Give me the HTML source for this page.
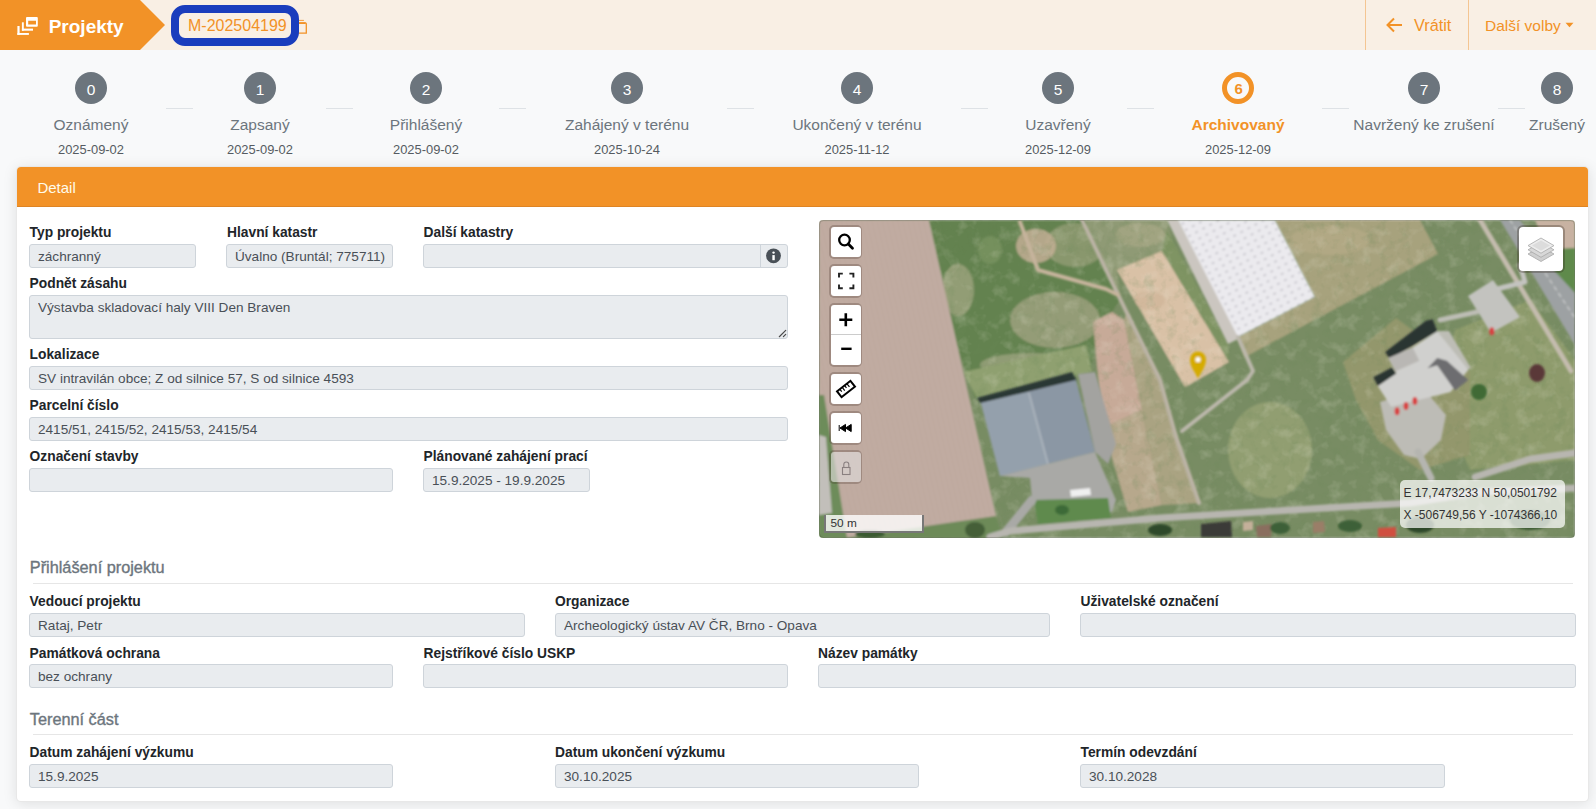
<!DOCTYPE html>
<html><head><meta charset="utf-8"><title>Projekt M-202504199</title>
<style>
html,body{margin:0;padding:0;}
body{width:1596px;height:809px;position:relative;overflow:hidden;background:#f8f9fa;font-family:"Liberation Sans",sans-serif;}
.t{position:absolute;white-space:nowrap;}
.r{position:absolute;}
</style></head><body>
<div class="r" style="left:0px;top:0px;width:1596px;height:50px;background:#f9efe4;"></div>
<svg class="r" style="left:0;top:0" width="170" height="50"><polygon points="0,0 140,0 165,25 140,50 0,50" fill="#f29227"/></svg>
<svg class="r" style="left:0;top:0" width="50" height="50" viewBox="0 0 50 50">
<path fill-rule="evenodd" fill="#fff" d="M27,17 H36.8 Q37.8,17 37.8,18 V25.7 Q37.8,26.7 36.8,26.7 H27 Q26,26.7 26,25.7 V18 Q26,17 27,17 Z M28.2,20.8 V24.5 H36 V20.8 Z"/>
<rect x="21.9" y="22.3" width="1.9" height="8.4" fill="#fff"/><rect x="21.9" y="28.6" width="11.1" height="2.1" fill="#fff"/>
<rect x="17.4" y="26" width="2.2" height="8.9" fill="#fff"/><rect x="17.4" y="33" width="11.5" height="1.9" fill="#fff"/>
</svg>
<div class="t" style="left:48.7px;top:14.82px;font-size:19px;line-height:23px;color:#fff;font-weight:bold;">Projekty</div>
<svg class="r" style="left:297px;top:18px" width="14" height="18" viewBox="0 0 14 18">
<path d="M0,4.9 H8.4 Q9.3,4.9 9.3,5.8 V15.1 H0" fill="none" stroke="#f29227" stroke-width="1.3"/>
<path d="M0,5.2 H8.6" stroke="#f29227" stroke-width="1.6"/>
<path d="M0,2.4 H6.9" stroke="#f29227" stroke-width="0.9"/>
</svg>
<div class="r" style="left:171px;top:5px;width:128px;height:41px;border:8px solid #1a3dbd;border-radius:14px;box-sizing:border-box;"></div>
<div class="t" style="left:188px;top:15.66px;font-size:16px;line-height:19px;color:#f29227;font-weight:normal;">M-202504199</div>
<div class="r" style="left:1365px;top:0px;width:1px;height:50px;background:#f4c592;"></div>
<div class="r" style="left:1468px;top:0px;width:1px;height:50px;background:#f4c592;"></div>
<svg class="r" style="left:1384px;top:15px" width="20" height="20" viewBox="0 0 20 20">
<path d="M18,10 H4 M10,3.5 L3.5,10 L10,16.5" fill="none" stroke="#f29227" stroke-width="2"/>
</svg>
<div class="t" style="left:1414px;top:15.35px;font-size:16.3px;line-height:20px;color:#f29227;font-weight:normal;">Vrátit</div>
<div class="t" style="left:1485px;top:16.13px;font-size:15.5px;line-height:19px;color:#f29227;font-weight:normal;">Další volby</div>
<svg class="r" style="left:1565px;top:22px" width="10" height="7"><polygon points="0.5,0.8 8.5,0.8 4.5,5.2" fill="#f29227"/></svg>
<div class="r" style="left:0px;top:50px;width:1596px;height:117px;background:#f8f9fa;"></div>
<div class="r" style="left:75px;top:72px;width:32px;height:32px;border-radius:50%;background:#6c757d;"></div>
<div class="t" style="left:-309px;width:800px;text-align:center;top:79.53px;font-size:15.5px;line-height:19px;color:#fff;font-weight:normal;">0</div>
<div class="t" style="left:-309px;width:800px;text-align:center;top:114.73px;font-size:15.5px;line-height:19px;color:#6c757d;font-weight:normal;">Oznámený</div>
<div class="t" style="left:-309px;width:800px;text-align:center;top:142.03px;font-size:12.9px;line-height:15px;color:#555b61;font-weight:normal;">2025-09-02</div>
<div class="r" style="left:244px;top:72px;width:32px;height:32px;border-radius:50%;background:#6c757d;"></div>
<div class="t" style="left:-140px;width:800px;text-align:center;top:79.53px;font-size:15.5px;line-height:19px;color:#fff;font-weight:normal;">1</div>
<div class="t" style="left:-140px;width:800px;text-align:center;top:114.73px;font-size:15.5px;line-height:19px;color:#6c757d;font-weight:normal;">Zapsaný</div>
<div class="t" style="left:-140px;width:800px;text-align:center;top:142.03px;font-size:12.9px;line-height:15px;color:#555b61;font-weight:normal;">2025-09-02</div>
<div class="r" style="left:410px;top:72px;width:32px;height:32px;border-radius:50%;background:#6c757d;"></div>
<div class="t" style="left:26px;width:800px;text-align:center;top:79.53px;font-size:15.5px;line-height:19px;color:#fff;font-weight:normal;">2</div>
<div class="t" style="left:26px;width:800px;text-align:center;top:114.73px;font-size:15.5px;line-height:19px;color:#6c757d;font-weight:normal;">Přihlášený</div>
<div class="t" style="left:26px;width:800px;text-align:center;top:142.03px;font-size:12.9px;line-height:15px;color:#555b61;font-weight:normal;">2025-09-02</div>
<div class="r" style="left:611px;top:72px;width:32px;height:32px;border-radius:50%;background:#6c757d;"></div>
<div class="t" style="left:227px;width:800px;text-align:center;top:79.53px;font-size:15.5px;line-height:19px;color:#fff;font-weight:normal;">3</div>
<div class="t" style="left:227px;width:800px;text-align:center;top:114.73px;font-size:15.5px;line-height:19px;color:#6c757d;font-weight:normal;">Zahájený v terénu</div>
<div class="t" style="left:227px;width:800px;text-align:center;top:142.03px;font-size:12.9px;line-height:15px;color:#555b61;font-weight:normal;">2025-10-24</div>
<div class="r" style="left:841px;top:72px;width:32px;height:32px;border-radius:50%;background:#6c757d;"></div>
<div class="t" style="left:457px;width:800px;text-align:center;top:79.53px;font-size:15.5px;line-height:19px;color:#fff;font-weight:normal;">4</div>
<div class="t" style="left:457px;width:800px;text-align:center;top:114.73px;font-size:15.5px;line-height:19px;color:#6c757d;font-weight:normal;">Ukončený v terénu</div>
<div class="t" style="left:457px;width:800px;text-align:center;top:142.03px;font-size:12.9px;line-height:15px;color:#555b61;font-weight:normal;">2025-11-12</div>
<div class="r" style="left:1042px;top:72px;width:32px;height:32px;border-radius:50%;background:#6c757d;"></div>
<div class="t" style="left:658px;width:800px;text-align:center;top:79.53px;font-size:15.5px;line-height:19px;color:#fff;font-weight:normal;">5</div>
<div class="t" style="left:658px;width:800px;text-align:center;top:114.73px;font-size:15.5px;line-height:19px;color:#6c757d;font-weight:normal;">Uzavřený</div>
<div class="t" style="left:658px;width:800px;text-align:center;top:142.03px;font-size:12.9px;line-height:15px;color:#555b61;font-weight:normal;">2025-12-09</div>
<div class="r" style="left:1222px;top:72px;width:32px;height:32px;border-radius:50%;border:5.2px solid #f29227;background:#f8f9fa;box-sizing:border-box;"></div>
<div class="t" style="left:838.5999999999999px;width:800px;text-align:center;top:80.00px;font-size:15px;line-height:18px;color:#f29227;font-weight:bold;">6</div>
<div class="t" style="left:838px;width:800px;text-align:center;top:114.73px;font-size:15.5px;line-height:19px;color:#f29227;font-weight:bold;">Archivovaný</div>
<div class="t" style="left:838px;width:800px;text-align:center;top:142.03px;font-size:12.9px;line-height:15px;color:#555b61;font-weight:normal;">2025-12-09</div>
<div class="r" style="left:1408px;top:72px;width:32px;height:32px;border-radius:50%;background:#6c757d;"></div>
<div class="t" style="left:1024px;width:800px;text-align:center;top:79.53px;font-size:15.5px;line-height:19px;color:#fff;font-weight:normal;">7</div>
<div class="t" style="left:1024px;width:800px;text-align:center;top:114.73px;font-size:15.5px;line-height:19px;color:#6c757d;font-weight:normal;">Navržený ke zrušení</div>
<div class="r" style="left:1541px;top:72px;width:32px;height:32px;border-radius:50%;background:#6c757d;"></div>
<div class="t" style="left:1157px;width:800px;text-align:center;top:79.53px;font-size:15.5px;line-height:19px;color:#fff;font-weight:normal;">8</div>
<div class="t" style="left:1157px;width:800px;text-align:center;top:114.73px;font-size:15.5px;line-height:19px;color:#6c757d;font-weight:normal;">Zrušený</div>
<div class="r" style="left:166px;top:108px;width:27px;height:1px;background:#dee2e6;"></div>
<div class="r" style="left:326px;top:108px;width:27px;height:1px;background:#dee2e6;"></div>
<div class="r" style="left:499px;top:108px;width:27px;height:1px;background:#dee2e6;"></div>
<div class="r" style="left:727px;top:108px;width:27px;height:1px;background:#dee2e6;"></div>
<div class="r" style="left:961px;top:108px;width:27px;height:1px;background:#dee2e6;"></div>
<div class="r" style="left:1127px;top:108px;width:27px;height:1px;background:#dee2e6;"></div>
<div class="r" style="left:1322px;top:108px;width:27px;height:1px;background:#dee2e6;"></div>
<div class="r" style="left:1498px;top:108px;width:27px;height:1px;background:#dee2e6;"></div>
<div class="r" style="left:16px;top:166px;width:1573px;height:636px;background:#fff;border-radius:5px;box-sizing:border-box;border:1px solid rgba(0,0,0,.09);box-shadow:0 2px 14px rgba(0,0,0,.10);"></div>
<div class="r" style="left:17px;top:167px;width:1571px;height:40px;background:#f29227;border-radius:4px 4px 0 0;"></div>
<div class="r" style="left:17px;top:206px;width:1571px;height:1px;background:#de8424;"></div>
<div class="t" style="left:37.4px;top:179.10px;font-size:15px;line-height:18px;color:#fffbea;font-weight:normal;">Detail</div>
<div class="t" style="left:29.6px;top:223.72px;font-size:13.8px;line-height:17px;color:#212529;font-weight:bold;">Typ projektu</div>
<div class="t" style="left:227px;top:223.72px;font-size:13.8px;line-height:17px;color:#212529;font-weight:bold;">Hlavní katastr</div>
<div class="t" style="left:423.5px;top:223.72px;font-size:13.8px;line-height:17px;color:#212529;font-weight:bold;">Další katastry</div>
<div class="r" style="left:29px;top:244px;width:167px;height:24px;background:#e9ecef;border:1px solid #ced4da;border-radius:3px;box-sizing:border-box;"></div>
<div class="t" style="left:38px;top:248.69px;font-size:13.6px;line-height:16px;color:#495057;font-weight:normal;white-space:nowrap;overflow:hidden;width:155px;">záchranný</div>
<div class="r" style="left:226px;top:244px;width:167px;height:24px;background:#e9ecef;border:1px solid #ced4da;border-radius:3px;box-sizing:border-box;"></div>
<div class="t" style="left:235px;top:248.69px;font-size:13.6px;line-height:16px;color:#495057;font-weight:normal;white-space:nowrap;overflow:hidden;width:155px;">Úvalno (Bruntál; 775711)</div>
<div class="r" style="left:423px;top:244px;width:365px;height:24px;background:#e9ecef;border:1px solid #ced4da;border-radius:3px;box-sizing:border-box;"></div>
<div class="r" style="left:760px;top:245px;width:1px;height:22px;background:#ced4da;"></div>
<svg class="r" style="left:765px;top:248px" width="17" height="16" viewBox="0 0 17 16">
<circle cx="8.5" cy="7.8" r="7.4" fill="#495057"/><rect x="7.35" y="7.1" width="2.4" height="5.1" fill="#fff"/><circle cx="8.55" cy="4.6" r="1.2" fill="#fff"/></svg>
<div class="t" style="left:29.6px;top:274.72px;font-size:13.8px;line-height:17px;color:#212529;font-weight:bold;">Podnět zásahu</div>
<div class="r" style="left:29px;top:295px;width:759px;height:44px;background:#e9ecef;border:1px solid #ced4da;border-radius:3px;box-sizing:border-box;"></div>
<div class="t" style="left:38px;top:299.69px;font-size:13.6px;line-height:16px;color:#495057;font-weight:normal;white-space:nowrap;overflow:hidden;width:747px;">Výstavba skladovací haly VIII Den Braven</div>
<svg class="r" style="left:777px;top:328px" width="10" height="10" viewBox="0 0 10 10">
<path d="M2.3,8.7 L8.7,2.4 M6.4,8.7 L8.7,6.4" stroke="#4a4a4a" stroke-width="1.2" stroke-linecap="round"/></svg>
<div class="t" style="left:29.6px;top:345.72px;font-size:13.8px;line-height:17px;color:#212529;font-weight:bold;">Lokalizace</div>
<div class="r" style="left:29px;top:366px;width:759px;height:24px;background:#e9ecef;border:1px solid #ced4da;border-radius:3px;box-sizing:border-box;"></div>
<div class="t" style="left:38px;top:370.69px;font-size:13.6px;line-height:16px;color:#495057;font-weight:normal;white-space:nowrap;overflow:hidden;width:747px;">SV intravilán obce; Z od silnice 57, S od silnice 4593</div>
<div class="t" style="left:29.6px;top:396.92px;font-size:13.8px;line-height:17px;color:#212529;font-weight:bold;">Parcelní číslo</div>
<div class="r" style="left:29px;top:417px;width:759px;height:24px;background:#e9ecef;border:1px solid #ced4da;border-radius:3px;box-sizing:border-box;"></div>
<div class="t" style="left:38px;top:421.69px;font-size:13.6px;line-height:16px;color:#495057;font-weight:normal;white-space:nowrap;overflow:hidden;width:747px;">2415/51, 2415/52, 2415/53, 2415/54</div>
<div class="t" style="left:29.6px;top:447.72px;font-size:13.8px;line-height:17px;color:#212529;font-weight:bold;">Označení stavby</div>
<div class="t" style="left:423.5px;top:447.72px;font-size:13.8px;line-height:17px;color:#212529;font-weight:bold;">Plánované zahájení prací</div>
<div class="r" style="left:29px;top:468px;width:364px;height:24px;background:#e9ecef;border:1px solid #ced4da;border-radius:3px;box-sizing:border-box;"></div>
<div class="r" style="left:423px;top:468px;width:167px;height:24px;background:#e9ecef;border:1px solid #ced4da;border-radius:3px;box-sizing:border-box;"></div>
<div class="t" style="left:432px;top:472.69px;font-size:13.6px;line-height:16px;color:#495057;font-weight:normal;white-space:nowrap;overflow:hidden;width:155px;">15.9.2025 - 19.9.2025</div>
<svg class="r" style="left:819px;top:220px" width="756" height="318" viewBox="819 220 756 318">
<defs><pattern id="stripes" width="5" height="40" patternUnits="userSpaceOnUse" patternTransform="rotate(-12.9)"><rect x="0" y="0" width="1.2" height="40" fill="#b09a92" opacity="0.14"/><rect x="2.6" y="0" width="0.8" height="40" fill="#d0beb4" opacity="0.14"/></pattern><pattern id="dots" width="8" height="7" patternUnits="userSpaceOnUse" patternTransform="rotate(-28)"><rect x="2" y="3" width="3" height="1.3" fill="#bdbbc2"/></pattern><filter id="bl" x="-1%" y="-1%" width="102%" height="102%"><feGaussianBlur stdDeviation="0.9"/></filter>
<filter id="nz1" x="0" y="0" width="100%" height="100%"><feTurbulence type="fractalNoise" baseFrequency="0.09" numOctaves="3" seed="4"/><feColorMatrix values="0 0 0 0 0.15  0 0 0 0 0.25  0 0 0 0 0.1  2.2 0 0 0 -1.1"/></filter>
<filter id="nz2" x="0" y="0" width="100%" height="100%"><feTurbulence type="fractalNoise" baseFrequency="0.07" numOctaves="3" seed="11"/><feColorMatrix values="0 0 0 0 0.85  0 0 0 0 0.82  0 0 0 0 0.7  2.2 0 0 0 -1.1"/></filter>
<clipPath id="mc"><rect x="819" y="220" width="756" height="318" rx="4"/></clipPath></defs>
<g clip-path="url(#mc)"><g filter="url(#bl)">
<polygon points="819,220 1575,220 1575,538 819,538" fill="#788c64" />
<polygon points="929,220 1085,220 1120,300 1100,330 1090,370 975,398 958,350" fill="#64824f" />
<ellipse cx="958" cy="290" rx="16" ry="26" fill="#a2a682" opacity="0.75"/>
<ellipse cx="1055" cy="320" rx="45" ry="28" fill="#a4a484" opacity="0.75"/>
<ellipse cx="1075" cy="245" rx="30" ry="22" fill="#98a07a" opacity="0.7"/>
<ellipse cx="1030" cy="365" rx="50" ry="12" fill="#a3a684" opacity="0.7"/>
<ellipse cx="990" cy="250" rx="12" ry="14" fill="#7e9a68" opacity="0.6"/>
<polygon points="963,372 1086,345 1092,372 977,398" fill="#8fa070" />
<polygon points="1085,220 1167,220 1175,250 1117,270 1120,300" fill="#8f9a74" />
<ellipse cx="1140" cy="235" rx="25" ry="12" fill="#a8a888" opacity="0.7"/>
<ellipse cx="1036" cy="246" rx="20" ry="17" fill="#c2ae94" opacity="0.85"/>
<polygon points="1093,322 1112,312 1124,320 1142,410 1103,428" fill="#c7aa98" />
<polygon points="1103,428 1142,410 1162,505 1128,512" fill="#b7a88c" />
<polygon points="1124,320 1127,313 1160,380 1176,437 1199,503 1162,505 1142,410" fill="#aaa382" />
<polygon points="1117,270 1162,251 1229,362 1185,387" fill="#d9c1a6" />
<ellipse cx="1150" cy="300" rx="15" ry="10" fill="#d2b89c" />
<polygon points="1275,220 1420,220 1438,254 1245,357 1238,337 1315,297" fill="#a7a27d" />
<ellipse cx="1330" cy="240" rx="40" ry="15" fill="#b4aa86" opacity="0.8"/>
<polygon points="1162,251 1167,230 1228,344 1229,362" fill="#7f9464" />
<polygon points="1455,330 1530,300 1575,360 1575,460 1470,470 1440,400" fill="#8e9b6c" />
<polygon points="1343,362 1396,318 1470,372 1470,455 1420,470 1378,440 1356,400" fill="#93976c" />
<ellipse cx="1270" cy="450" rx="42" ry="48" fill="#97a274" opacity="0.8"/>
</g>
<rect x="819" y="220" width="756" height="318" filter="url(#nz1)" opacity="0.3"/>
<rect x="819" y="220" width="756" height="318" filter="url(#nz2)" opacity="0.25"/>
<g filter="url(#bl)">
<polygon points="819,220 929,220 1001,538 819,538" fill="#c0aba1" />
<polygon points="819,220 929,220 1001,538 819,538" fill="url(#stripes)" />
<polygon points="844,538 996,516 1003,538" fill="#6d8a58" />
<ellipse cx="975" cy="530" rx="10" ry="8" fill="#3a5232" opacity="0.8"/>
<polygon points="819,395 824,395 847,538 819,538" fill="#6d8c5a" />
<polygon points="819,435 826,437 832,513 819,515" fill="#c2bfba" />
<polygon points="1167,220 1178,220 1240,338 1228,344" fill="#cbc6c0" />
<polygon points="1178,220 1275,220 1315,297 1238,337" fill="#ebeaee" />
<polygon points="1178,220 1275,220 1315,297 1238,337" fill="url(#dots)" />
<polygon points="977,398 1072,372 1077,381 981,404" fill="#2a3834" />
<polygon points="981,403 1076,380 1095,452 1000,476" fill="#8b97a4" />
<polygon points="981,403 1029,392 1048,464 1000,476" fill="#94a0ac" />
<polyline points="1029,393 1048,464" fill="none" stroke="#b0b8c0" stroke-width="1.5" stroke-linejoin="round" stroke-linecap="round" />
<polygon points="1078,374 1095,372 1116,444 1108,464 1095,452" fill="#a3a3a0" />
<polygon points="1000,476 1095,452 1116,500 1112,512 1040,518 1032,500 1030,478" fill="#a9a9a6" />
<polygon points="1034,500 1108,498 1111,518 1038,524" fill="#5f8a4e" />
<polyline points="1032,500 1006,532" fill="none" stroke="#a9a9a6" stroke-width="9" stroke-linejoin="round" stroke-linecap="round" />
<ellipse cx="1062" cy="510" rx="7" ry="5" fill="#3e6a38" />
<polygon points="1070,490 1090,488 1091,495 1071,497" fill="#f0f0f0" />
<polyline points="990,537 1010,531 1160,518 1410,503 1480,492 1575,488" fill="none" stroke="#b8b6b0" stroke-width="7" stroke-linejoin="round" stroke-linecap="round" />
<polyline points="1475,477 1530,459 1575,453" fill="none" stroke="#b8b6b0" stroke-width="7" stroke-linejoin="round" stroke-linecap="round" />
<polyline points="1082,220 1127,313 1160,380 1176,437 1199,503" fill="none" stroke="#bcb4a6" stroke-width="4" stroke-linejoin="round" stroke-linecap="round" />
<polyline points="1020,222 1038,270 1106,289 1118,295" fill="none" stroke="#c6b49c" stroke-width="4" stroke-linejoin="round" stroke-linecap="round" />
<polyline points="1238,337 1253,371 1247,380 1182,431" fill="none" stroke="#bcb8ac" stroke-width="4" stroke-linejoin="round" stroke-linecap="round" />
<polygon points="1500,220 1520,220 1575,293 1575,345" fill="#9da1a3" />
<polyline points="1510,220 1575,318" fill="none" stroke="#e0e0e0" stroke-width="1" stroke-linejoin="round" stroke-linecap="round" stroke-dasharray="4 4"/>
<polyline points="1480,220 1571,371" fill="none" stroke="#c4bcae" stroke-width="5" stroke-linejoin="round" stroke-linecap="round" />
<polygon points="1535,220 1575,220 1575,248 1548,252" fill="#c8b2a2" />
<polygon points="1535,250 1575,248 1575,293" fill="#5f8a4c" />
<polygon points="1468,296 1493,280 1520,317 1491,333" fill="#c3c3bf" />
<polyline points="1493,290 1525,282 1520,265" fill="none" stroke="#c3c3bf" stroke-width="5" stroke-linejoin="round" stroke-linecap="round" />
<polygon points="1380,402 1423.8,389 1446,415 1441,440 1421,459 1404,455 1386,430" fill="#bdbcb6" />
<polyline points="1418,452 1431,478" fill="none" stroke="#b5b5b0" stroke-width="7" stroke-linejoin="round" stroke-linecap="round" />
<polyline points="1440,320 1477,312" fill="none" stroke="#bdbdb5" stroke-width="5" stroke-linejoin="round" stroke-linecap="round" />
<polygon points="1437,331 1449,331 1471,368 1462,372" fill="#bdbdb5" />
<polygon points="1377.8,386 1396.3,372.7 1388.2,357.9 1412.7,347.5 1437.2,331.2 1468.3,369.7 1450.5,392 1391.2,406.8" fill="#d0d0ce" />
<polygon points="1385.2,351.9 1426,320.8 1432.7,319.3 1437.2,331.2 1389.7,359.3" fill="#2c3432" />
<polygon points="1373.4,377.2 1391.9,367.5 1396.3,373.4 1377.8,386" fill="#2c3432" />
<polygon points="1388.2,357.9 1412.7,347.5 1419.3,360.8 1395.6,371.2" fill="#b9b7b4" />
<polygon points="1437.2,357.9 1446.8,360.8 1468.3,380.1 1455,390.5 1437.2,365.3 1427.5,368.2" fill="#6d6d70" />
<ellipse cx="1397.1" cy="411.3" rx="2.5" ry="4" fill="#d84040" />
<ellipse cx="1406" cy="406.1" rx="2.5" ry="4" fill="#d84040" />
<ellipse cx="1414.9" cy="400.9" rx="2.5" ry="4" fill="#d84040" />
<ellipse cx="1491.8" cy="331.2" rx="2.5" ry="4" fill="#d84040" />
<ellipse cx="1479" cy="392" rx="8" ry="8" fill="#3f6a35" />
<ellipse cx="1537" cy="373" rx="8" ry="9" fill="#5a3838" />
<polygon points="1201,524 1231,521 1232,537 1201,537" fill="#3a3a38" />
<polygon points="1256,526 1271,524 1271,537 1257,537" fill="#8a6e5e" />
<polygon points="1243,522 1253,521 1253,530 1243,531" fill="#c4b09a" />
<polygon points="1313,522 1324,521 1325,532 1313,533" fill="#9a7e68" />
<polygon points="1378,528 1396,527 1396,537 1378,537" fill="#d05040" />
<ellipse cx="1160" cy="530" rx="12" ry="6" fill="#2e4a2a" />
<ellipse cx="1420" cy="525" rx="14" ry="8" fill="#2e4a2a" />
<ellipse cx="1530" cy="520" rx="20" ry="10" fill="#3a5a32" />
<ellipse cx="870" cy="534" rx="15" ry="4" fill="#3a5a32" />
<ellipse cx="1280" cy="528" rx="10" ry="6" fill="#3e6038" />
<ellipse cx="1350" cy="526" rx="12" ry="6" fill="#3e6038" />
<path d="M1198,378.5 C1195,372 1190,367 1190,359.5 A8,8 0 0 1 1206,359.5 C1206,367 1201,372 1198,378.5 Z" fill="#d5ab00"/>
<ellipse cx="1198" cy="359.5" rx="2.6" ry="2.6" fill="#fff" />
</g>
</g>
<rect x="819.5" y="220.5" width="755" height="317" rx="4" fill="none" stroke="rgba(0,0,0,0.15)"/>
</svg>
<div class="r" style="left:829px;top:224.5px;width:33px;height:34px;border-radius:5px;background:rgba(60,40,30,0.25)"></div>
<div class="r" style="left:831px;top:226.5px;width:30px;height:30px;border-radius:3px;background:#fff"><svg width="30" height="30" viewBox="0 0 30 30"><circle cx="13.5" cy="13" r="5.3" fill="none" stroke="#000" stroke-width="2.3"/><path d="M17.3,17 L21.5,21.2" stroke="#000" stroke-width="2.8" stroke-linecap="round"/></svg></div>
<div class="r" style="left:829px;top:263.5px;width:33px;height:34px;border-radius:5px;background:rgba(60,40,30,0.25)"></div>
<div class="r" style="left:831px;top:265.5px;width:30px;height:30px;border-radius:3px;background:#fff"><svg width="30" height="30" viewBox="0 0 30 30"><path d="M8,11.5 V7.6 H11.8 M18.4,7.6 H22.4 V11.5 M22.4,18.4 V22.2 H18.4 M11.8,22.2 H8 V18.4" fill="none" stroke="#222" stroke-width="1.9"/></svg></div>
<div class="r" style="left:829px;top:303px;width:33px;height:64px;border-radius:5px;background:rgba(60,40,30,0.25)"></div>
<div class="r" style="left:831px;top:305px;width:30px;height:60px;border-radius:3px;background:#fff"><svg width="30" height="60" viewBox="0 0 30 60"><path d="M8.3,14.7 H21.3 M14.8,8.2 V21.2" stroke="#000" stroke-width="2.6"/><path d="M10.2,43.8 H20.6" stroke="#000" stroke-width="2.4"/><rect x="0" y="29" width="30" height="1" fill="#ccc"/></svg></div>
<div class="r" style="left:829px;top:372px;width:33px;height:34px;border-radius:5px;background:rgba(60,40,30,0.25)"></div>
<div class="r" style="left:831px;top:374px;width:30px;height:30px;border-radius:3px;background:#fff"><svg width="30" height="30" viewBox="0 0 30 30"><g transform="rotate(-38 15 15)"><rect x="6.5" y="11.3" width="17" height="7.4" fill="none" stroke="#000" stroke-width="2"/><path d="M10,11.5 V14.5 M13,11.5 V15.5 M16,11.5 V14.5 M19,11.5 V15.5" stroke="#000" stroke-width="1.2"/></g></svg></div>
<div class="r" style="left:829px;top:410.5px;width:33px;height:34px;border-radius:5px;background:rgba(60,40,30,0.25)"></div>
<div class="r" style="left:831px;top:412.5px;width:30px;height:30px;border-radius:3px;background:#fff"><svg width="30" height="30" viewBox="0 0 30 30"><path d="M8.2,12 V18 M9,15 L14.5,11.4 V18.6 Z M14.5,15 L20.2,11.4 V18.6 Z" fill="#000" stroke="#000" stroke-width="1"/></svg></div>
<div class="r" style="left:829px;top:449.5px;width:33px;height:34px;border-radius:5px;background:rgba(60,40,30,0.25)"></div>
<div class="r" style="left:831px;top:451.5px;width:30px;height:30px;border-radius:3px;background:rgba(255,255,255,0.55)"><svg width="30" height="30" viewBox="0 0 30 30"><rect x="11.5" y="15.5" width="7.5" height="7" fill="none" stroke="#8a8080" stroke-width="1.1"/><path d="M12.8,15.5 V12.5 A2.5,2.5 0 0 1 17.8,12.5 V15.5" fill="none" stroke="#8a8080" stroke-width="1.1"/></svg></div>
<div class="r" style="left:1517px;top:225px;width:48px;height:48px;border-radius:6px;background:rgba(50,40,30,0.3)"></div>
<div class="r" style="left:1519px;top:227px;width:44px;height:44px;border-radius:4px;background:#fff"><svg width="44" height="44" viewBox="0 0 44 44"><path d="M9,27 L22,19.5 L35,27 L22,34.5 Z" fill="#cfcfcf" stroke="#a8a8a8" stroke-width="0.8"/><path d="M9,22.8 L22,15.3 L35,22.8 L22,30.3 Z" fill="#d8d8d8" stroke="#a8a8a8" stroke-width="0.8"/><path d="M9,18.6 L22,11 L35,18.6 L22,26.2 Z" fill="#ececec" stroke="#a8a8a8" stroke-width="0.8"/><path d="M13,18.6 L22,13.5 L31,18.6 L22,23.8 Z" fill="#dcdcdc"/></svg></div>
<div class="r" style="left:824px;top:515px;width:96px;height:16px;border:2px solid #777;border-top:0;background:rgba(255,255,255,0.8)"></div>
<div class="t" style="left:830.5px;top:515.5px;font-size:11.8px;line-height:14px;color:#333">50 m</div>
<div class="r" style="left:1400px;top:480px;width:165px;height:48px;border-radius:5px;background:rgba(255,255,255,0.72)"></div>
<div class="t" style="left:1403.5px;top:486.2px;font-size:12px;line-height:14px;color:#333">E 17,7473233 N 50,0501792</div>
<div class="t" style="left:1403.5px;top:508.2px;font-size:12px;line-height:14px;color:#333">X -506749,56 Y -1074366,10</div>
<div class="t" style="left:29.8px;top:557.15px;font-size:16.3px;line-height:20px;color:#6c757d;font-weight:normal;-webkit-text-stroke:0.35px #6c757d;">Přihlášení projektu</div>
<div class="r" style="left:33px;top:583px;width:1540px;height:1px;background:#e6e6e6;"></div>
<div class="t" style="left:29.6px;top:593.32px;font-size:13.8px;line-height:17px;color:#212529;font-weight:bold;">Vedoucí projektu</div>
<div class="t" style="left:555px;top:593.32px;font-size:13.8px;line-height:17px;color:#212529;font-weight:bold;">Organizace</div>
<div class="t" style="left:1080.5px;top:593.32px;font-size:13.8px;line-height:17px;color:#212529;font-weight:bold;">Uživatelské označení</div>
<div class="r" style="left:29px;top:613px;width:496px;height:24px;background:#e9ecef;border:1px solid #ced4da;border-radius:3px;box-sizing:border-box;"></div>
<div class="t" style="left:38px;top:617.69px;font-size:13.6px;line-height:16px;color:#495057;font-weight:normal;white-space:nowrap;overflow:hidden;width:484px;">Rataj, Petr</div>
<div class="r" style="left:555px;top:613px;width:495px;height:24px;background:#e9ecef;border:1px solid #ced4da;border-radius:3px;box-sizing:border-box;"></div>
<div class="t" style="left:564px;top:617.69px;font-size:13.6px;line-height:16px;color:#495057;font-weight:normal;white-space:nowrap;overflow:hidden;width:483px;">Archeologický ústav AV ČR, Brno - Opava</div>
<div class="r" style="left:1080px;top:613px;width:496px;height:24px;background:#e9ecef;border:1px solid #ced4da;border-radius:3px;box-sizing:border-box;"></div>
<div class="t" style="left:29.6px;top:644.72px;font-size:13.8px;line-height:17px;color:#212529;font-weight:bold;">Památková ochrana</div>
<div class="t" style="left:423.5px;top:644.72px;font-size:13.8px;line-height:17px;color:#212529;font-weight:bold;">Rejstříkové číslo USKP</div>
<div class="t" style="left:818px;top:644.72px;font-size:13.8px;line-height:17px;color:#212529;font-weight:bold;">Název památky</div>
<div class="r" style="left:29px;top:664px;width:364px;height:24px;background:#e9ecef;border:1px solid #ced4da;border-radius:3px;box-sizing:border-box;"></div>
<div class="t" style="left:38px;top:668.69px;font-size:13.6px;line-height:16px;color:#495057;font-weight:normal;white-space:nowrap;overflow:hidden;width:352px;">bez ochrany</div>
<div class="r" style="left:423px;top:664px;width:365px;height:24px;background:#e9ecef;border:1px solid #ced4da;border-radius:3px;box-sizing:border-box;"></div>
<div class="r" style="left:818px;top:664px;width:758px;height:24px;background:#e9ecef;border:1px solid #ced4da;border-radius:3px;box-sizing:border-box;"></div>
<div class="t" style="left:29.8px;top:708.65px;font-size:16.3px;line-height:20px;color:#6c757d;font-weight:normal;-webkit-text-stroke:0.35px #6c757d;">Terenní část</div>
<div class="r" style="left:33px;top:734px;width:1540px;height:1px;background:#e6e6e6;"></div>
<div class="t" style="left:29.6px;top:744.32px;font-size:13.8px;line-height:17px;color:#212529;font-weight:bold;">Datum zahájení výzkumu</div>
<div class="t" style="left:555px;top:744.32px;font-size:13.8px;line-height:17px;color:#212529;font-weight:bold;">Datum ukončení výzkumu</div>
<div class="t" style="left:1080.5px;top:744.32px;font-size:13.8px;line-height:17px;color:#212529;font-weight:bold;">Termín odevzdání</div>
<div class="r" style="left:29px;top:764px;width:364px;height:24px;background:#e9ecef;border:1px solid #ced4da;border-radius:3px;box-sizing:border-box;"></div>
<div class="t" style="left:38px;top:768.69px;font-size:13.6px;line-height:16px;color:#495057;font-weight:normal;white-space:nowrap;overflow:hidden;width:352px;">15.9.2025</div>
<div class="r" style="left:555px;top:764px;width:364px;height:24px;background:#e9ecef;border:1px solid #ced4da;border-radius:3px;box-sizing:border-box;"></div>
<div class="t" style="left:564px;top:768.69px;font-size:13.6px;line-height:16px;color:#495057;font-weight:normal;white-space:nowrap;overflow:hidden;width:352px;">30.10.2025</div>
<div class="r" style="left:1080px;top:764px;width:365px;height:24px;background:#e9ecef;border:1px solid #ced4da;border-radius:3px;box-sizing:border-box;"></div>
<div class="t" style="left:1089px;top:768.69px;font-size:13.6px;line-height:16px;color:#495057;font-weight:normal;white-space:nowrap;overflow:hidden;width:353px;">30.10.2028</div>
</body></html>
